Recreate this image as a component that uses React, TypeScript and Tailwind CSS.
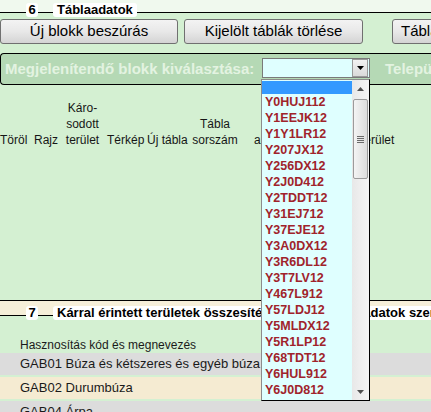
import React from "react";

const items = [
  "Y0HUJ112",
  "Y1EEJK12",
  "Y1Y1LR12",
  "Y207JX12",
  "Y256DX12",
  "Y2J0D412",
  "Y2TDDT12",
  "Y31EJ712",
  "Y37EJE12",
  "Y3A0DX12",
  "Y3R6DL12",
  "Y3T7LV12",
  "Y467L912",
  "Y57LDJ12",
  "Y5MLDX12",
  "Y5R1LP12",
  "Y68TDT12",
  "Y6HUL912",
  "Y6J0D812",
];

function Btn({ children, className }: { children: React.ReactNode; className: string }) {
  return (
    <div
      className={`h-[25px] shrink-0 rounded-[3px] border border-[#707070] bg-gradient-to-b from-[#f3f3f3] via-[#e8e8e8] to-[#d4d4d4] flex items-center text-[15px] text-black whitespace-nowrap ${className}`}
    >
      {children}
    </div>
  );
}

function Legend({ num, title }: { num: string; title: string }) {
  return (
    <div className="flex h-[14px] -mt-[10px] items-center font-bold text-[13px] leading-[14px] text-black whitespace-nowrap">
      <div className="ml-[26px] w-[12px] h-[14px] shrink-0 rounded-[3px] bg-white flex items-center justify-center">
        {num}
      </div>
      <div className="ml-[15px] h-[14px] shrink-0 rounded-[3px] bg-white px-[4px]">{title}</div>
    </div>
  );
}

function TriUp() {
  return (
    <svg width="7" height="4" viewBox="0 0 7 4">
      <path d="M0 4 L3.5 0 L7 4 Z" fill="#505050" />
    </svg>
  );
}

function TriDown({ color = "#505050" }: { color?: string }) {
  return (
    <svg width="7" height="4" viewBox="0 0 7 4">
      <path d="M0 0 L7 0 L3.5 4 Z" fill={color} />
    </svg>
  );
}

export default function App() {
  return (
    <div className="relative w-[431px] h-[412px] overflow-hidden bg-[#f0f9ee] font-['Liberation_Sans',Arial,sans-serif] text-[13px] text-[#1a1a1a]">
      {/* Fieldset 6 */}
      <div className="mt-[12px] h-[289px] border-t border-b border-black bg-[#d4f0d2]">
        <Legend num="6" title="Táblaadatok" />
        <div className="mt-[2px] flex">
          <Btn className="w-[178px] justify-center">Új blokk beszúrás</Btn>
          <Btn className="ml-[6px] w-[179px] justify-center">Kijelölt táblák törlése</Btn>
          <Btn className="ml-[29px] w-[200px] justify-start pl-[8px]">Táblák listázása</Btn>
        </div>
        <div className="mt-[9px] h-[32px] rounded-l-[4px] border border-r-0 border-black bg-[#b5d9b5] flex items-start whitespace-nowrap">
          <span className="ml-[4px] w-[257px] shrink-0 mt-[6px] font-bold text-[15px] leading-[18px] text-[#e3f3e1]">
            Megjelenítendő blokk kiválasztása:
          </span>
          <div className="mt-[4px] w-[108px] shrink-0 h-[20px] border border-[#7a7a7a] bg-[#dfffff] flex">
            <div className="flex-1" />
            <div className="w-[16px] mr-[1px] border border-[#9a9a9a] bg-gradient-to-b from-[#f2f2f2] to-[#dadada] flex items-center justify-center">
              <TriDown color="#000000" />
            </div>
          </div>
          <span className="ml-[15px] shrink-0 mt-[6px] font-bold text-[15px] leading-[18px] text-[#e3f3e1]">
            Településnév:
          </span>
        </div>
        <div className="mt-[15px] flex items-end text-[12px] leading-[16px] text-[#161616] whitespace-nowrap">
          <div className="w-[34px] shrink-0">Töröl</div>
          <div className="w-[31px] shrink-0">Rajz</div>
          <div className="w-[35px] shrink-0 text-center">
            Káro-
            <br />
            sodott
            <br />
            terület
          </div>
          <div className="ml-[7px] w-[40px] shrink-0">Térkép</div>
          <div className="w-[45px] shrink-0">Új tábla</div>
          <div className="w-[46px] shrink-0 text-center">
            Tábla
            <br />
            sorszám
          </div>
          <div className="ml-[16px] w-[107px] shrink-0">azonosító</div>
          <div className="w-[36px] shrink-0">terület</div>
        </div>
      </div>

      {/* gap */}
      <div className="h-[14px] bg-[#f6efd9]" />

      {/* Fieldset 7 */}
      <div className="border-t border-black bg-[#d4f0d2] h-[200px]">
        <Legend num="7" title="Kárral érintett területek összesítése a kárbejelent adatok szerint" />
        <div className="mt-[18px] pl-[20px] h-[15px] text-[12px] leading-[15px] whitespace-nowrap">
          Hasznosítás kód és megnevezés
        </div>
        <div className="h-[22px] bg-[#dcdcdc] pl-[20px] flex items-center whitespace-nowrap">
          GAB01 Búza és kétszeres és egyéb búza
        </div>
        <div className="mt-[2px] h-[22px] bg-[#f5ebd2] pl-[20px] flex items-center whitespace-nowrap">
          GAB02 Durumbúza
        </div>
        <div className="mt-[2px] h-[22px] bg-[#dcdcdc] pl-[20px] flex items-center whitespace-nowrap">
          GAB04 Árpa
        </div>
      </div>

      {/* Open dropdown list */}
      <div className="absolute left-[261px] top-[79px] w-[109px] h-[322px] border border-l-[#8c8c8c] border-t-[#8c8c8c] border-r-black border-b-black bg-[#dfffff] flex">
        <div className="flex-1 pt-[1px]">
          <div className="h-[13px] bg-[#3399ff]" />
          {items.map((it) => (
            <div
              key={it}
              className="h-[16px] leading-[16px] pl-[3px] text-[12.5px] font-bold text-[#a0232b] whitespace-nowrap"
            >
              {it}
            </div>
          ))}
        </div>
        <div className="w-[17px] bg-gradient-to-r from-[#e8e8e8] to-[#f5f5f5] flex flex-col items-center">
          <div className="h-[17px] w-full flex items-center justify-center">
            <TriUp />
          </div>
          <div className="mt-[2px] w-[15px] h-[80px] rounded-[2px] border border-[#9b9b9b] bg-gradient-to-r from-[#f4f4f4] to-[#dcdcdc] flex flex-col items-center justify-center gap-[1px]">
            <div className="w-[7px] h-[1px] bg-[#6a6a6a]" />
            <div className="w-[7px] h-[1px] bg-[#6a6a6a]" />
            <div className="w-[7px] h-[1px] bg-[#6a6a6a]" />
            <div className="w-[7px] h-[1px] bg-[#6a6a6a]" />
          </div>
          <div className="flex-1" />
          <div className="h-[17px] w-full flex items-center justify-center">
            <TriDown />
          </div>
        </div>
      </div>
    </div>
  );
}
